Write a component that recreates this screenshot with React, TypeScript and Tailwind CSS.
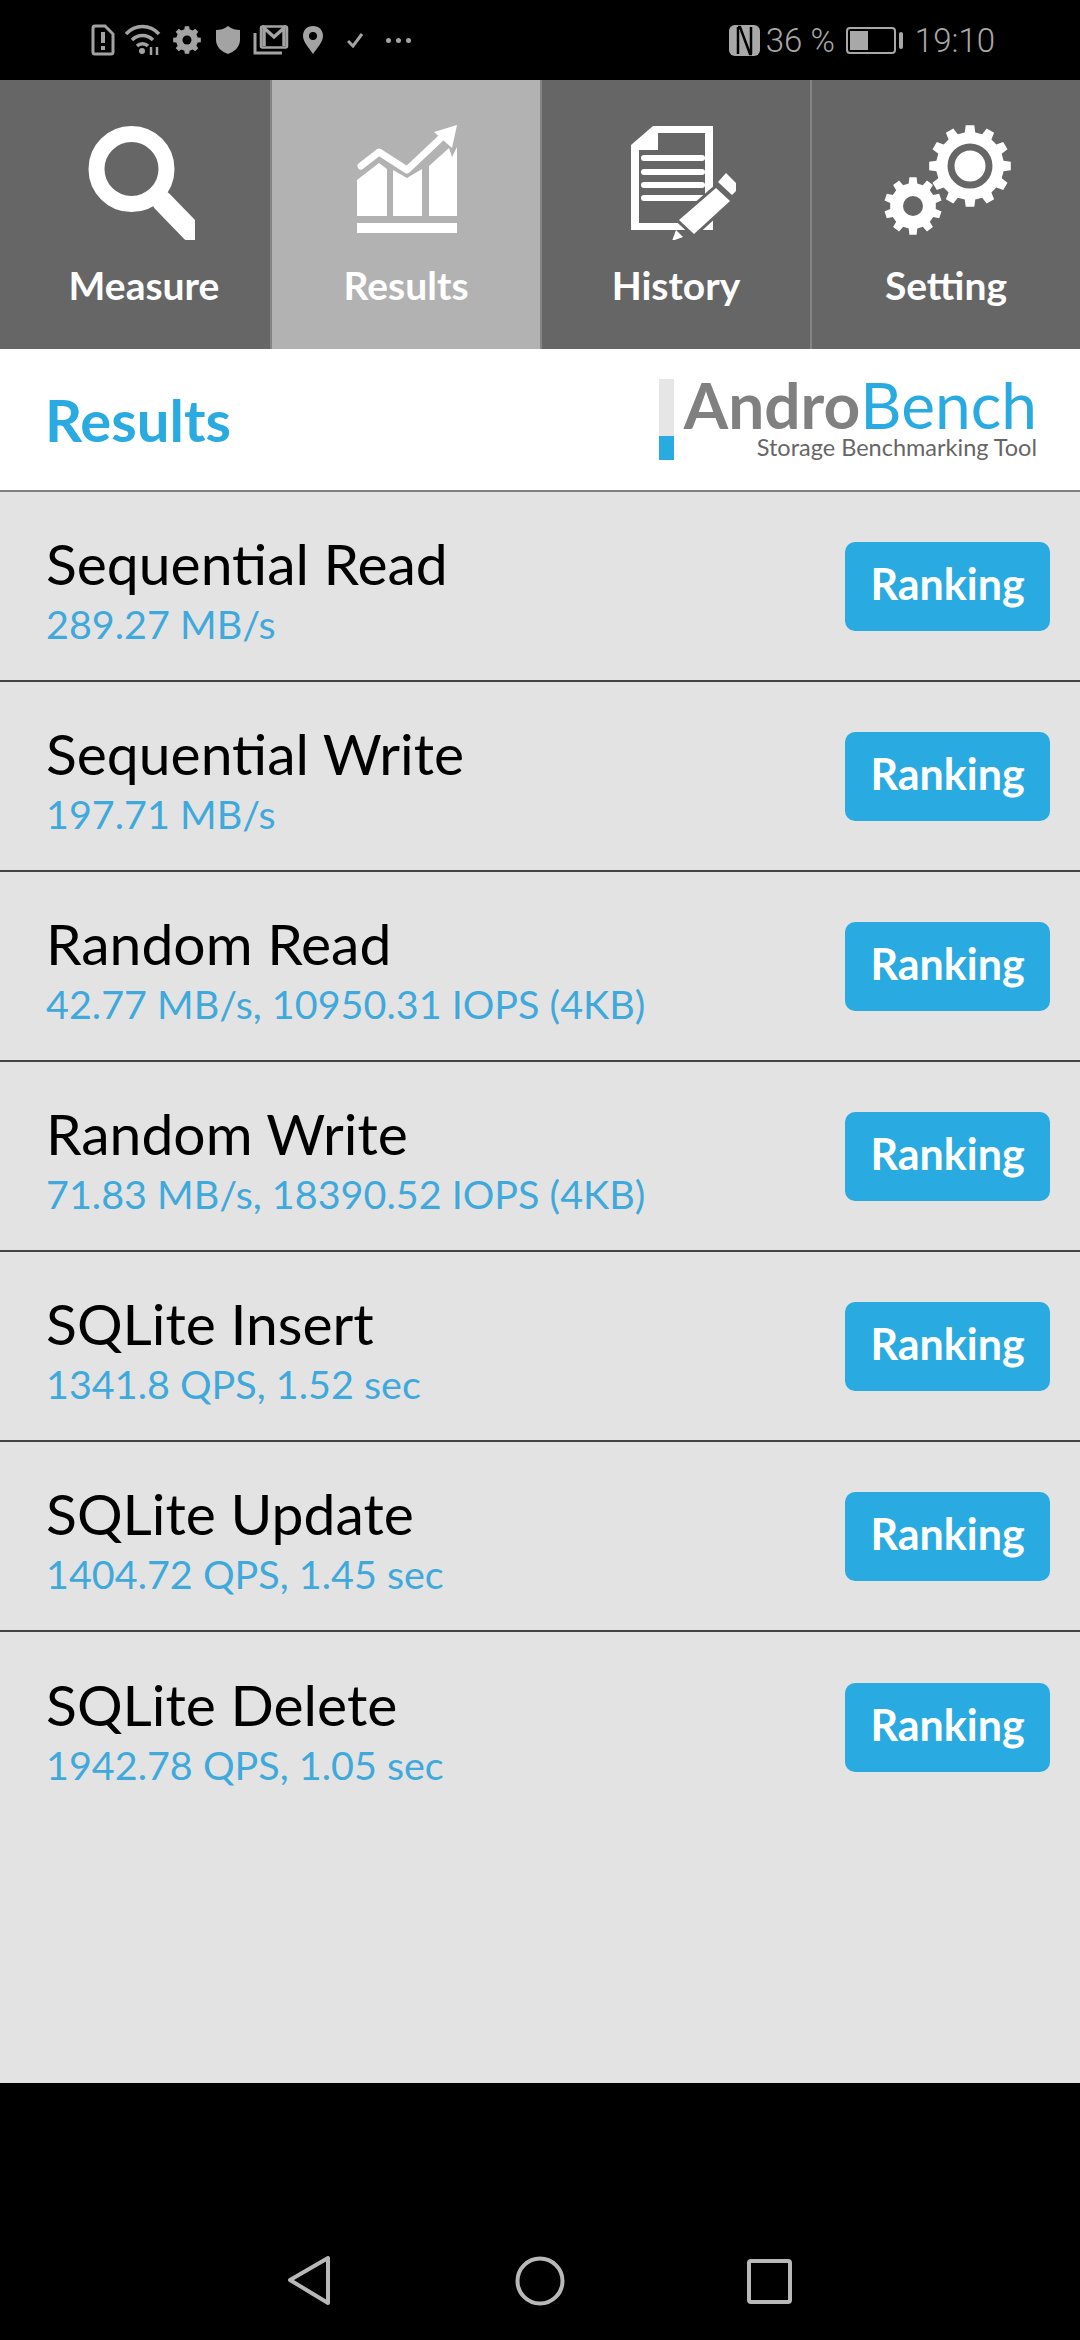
import React from 'react';

const ROWS = [
  { name: 'Sequential Read', value: '289.27 MB/s' },
  { name: 'Sequential Write', value: '197.71 MB/s' },
  { name: 'Random Read', value: '42.77 MB/s, 10950.31 IOPS (4KB)' },
  { name: 'Random Write', value: '71.83 MB/s, 18390.52 IOPS (4KB)' },
  { name: 'SQLite Insert', value: '1341.8 QPS, 1.52 sec' },
  { name: 'SQLite Update', value: '1404.72 QPS, 1.45 sec' },
  { name: 'SQLite Delete', value: '1942.78 QPS, 1.05 sec' },
];

// toothed wheel outline, used by the status bar and the Setting tab
const gearPath = (cx: number, cy: number, outer: number, root: number, teeth: number) => {
  const pts: string[] = [];
  const step = (Math.PI * 2) / teeth;
  for (let i = 0; i < teeth; i++) {
    const a = i * step - Math.PI / 2;
    const at = (r: number, da: number) =>
      `${(cx + r * Math.cos(a + da)).toFixed(1)} ${(cy + r * Math.sin(a + da)).toFixed(1)}`;
    pts.push(at(root, -step * 0.3), at(outer, -step * 0.2), at(outer, step * 0.2), at(root, step * 0.3));
  }
  return `M${pts.join('L')}Z`;
};

const MeasureIcon = () => (
  <svg width="120" height="120" viewBox="0 0 120 120">
    <circle cx="56.5" cy="49" r="35" fill="none" stroke="#fff" strokeWidth="16" />
    <path d="M87 81L116 111" stroke="#fff" strokeWidth="21" strokeLinecap="round" />
    <path d="M81 75L90 84" stroke="#fff" strokeWidth="10" />
  </svg>
);

const ResultsIcon = () => (
  <svg width="120" height="120" viewBox="0 0 120 120" fill="#fff">
    <path d="M11 60L33 43L41 49V96H11Z" />
    <path d="M47 50L61 58L76 49V96H47Z" />
    <path d="M83 46L103 28L106 37L111 27V96H83Z" />
    <rect x="11" y="103" width="100" height="10" />
    <path d="M15 46L33 32L61 50L96 17" fill="none" stroke="#fff" strokeWidth="7" strokeLinecap="round" strokeLinejoin="round" />
    <path d="M111 5L88 12L106 28Z" />
  </svg>
);

const HistoryIcon = () => (
  <svg width="120" height="120" viewBox="0 0 120 120">
    <path d="M15 25L37 6H97V110H15Z" fill="#fff" />
    <path d="M42 13H89V103H23V30H42Z" fill="#666666" />
    <path d="M28 38H86M28 52H86M28 65H86M28 78H86" stroke="#fff" strokeWidth="6" strokeLinecap="round" />
    <path d="M100 68L114 81L78 114L63 100Z" fill="#fff" stroke="#666666" strokeWidth="6" />
    <path d="M100 68L114 81L78 114L63 100Z" fill="#fff" />
    <path d="M110 53L124 67L116 75L102 62Z" fill="#fff" />
    <path d="M56 121L60 110L67 117Z" fill="#fff" />
  </svg>
);

const SettingIcon = () => (
  <svg width="120" height="120" viewBox="0 0 120 120" overflow="visible">
    <path d={gearPath(84, 46, 41, 34, 12)} fill="#fff" />
    <circle cx="84" cy="46" r="19" fill="#fff" stroke="#666666" strokeWidth="7" />
    <path d={gearPath(27, 86, 29, 23, 10)} fill="#fff" />
    <circle cx="27" cy="86" r="10" fill="#666666" />
  </svg>
);

const TABS = [
  { label: 'Measure', icon: <MeasureIcon />, bg: 'bg-[#666666]', labelClass: 'ml-[18px]' },
  { label: 'Results', icon: <ResultsIcon />, bg: 'bg-[#b2b2b2]', labelClass: '' },
  { label: 'History', icon: <HistoryIcon />, bg: 'bg-[#666666]', labelClass: '' },
  { label: 'Setting', icon: <SettingIcon />, bg: 'bg-[#666666]', labelClass: '' },
];

const StatusIcons = () => (
  <div className="flex items-center">
    <svg width="26" height="32" viewBox="0 0 26 32" className="mr-[8px]">
      <path d="M3 4a2 2 0 0 1 2-2h10l8 8v18a2 2 0 0 1-2 2H5a2 2 0 0 1-2-2Z" fill="none" stroke="#a3a3a3" strokeWidth="3" />
      <path d="M13 8v11M13 22v4" stroke="#a3a3a3" strokeWidth="4" />
    </svg>
    <svg width="38" height="32" viewBox="0 0 38 32" className="mr-[10px]" fill="none" stroke="#a3a3a3" strokeWidth="3.5">
      <path d="M2 10C11 0 26 0 35 10M8 16C14 10 23 10 29 16M13 22c3-3 8-3 11 0" />
      <circle cx="18" cy="27" r="3" fill="#a3a3a3" stroke="none" />
      <path d="M27 23v8M33 23v8" strokeWidth="2.5" />
    </svg>
    <svg width="30" height="30" viewBox="0 0 30 30" className="mr-[14px]">
      <path d={gearPath(15, 15, 14, 11, 8)} fill="#a3a3a3" />
      <circle cx="15" cy="15" r="4.5" fill="#000" />
    </svg>
    <svg width="24" height="28" viewBox="0 0 24 28" className="mr-[13px]">
      <path d="M12 0C16 3 20 4 24 4V14C24 21 18 26 12 28C6 26 0 21 0 14V4C4 4 8 3 12 0Z" fill="#a3a3a3" />
    </svg>
    <svg width="36" height="30" viewBox="0 0 36 30" className="mr-[14px]" fill="none" stroke="#a3a3a3">
      <path d="M2 8V28H29" strokeWidth="3" />
      <rect x="8" y="1.5" width="26" height="21" rx="1.5" strokeWidth="2.5" />
      <path d="M11 21V3L21 12L31 3V21" strokeWidth="3.5" />
    </svg>
    <svg width="20" height="28" viewBox="0 0 20 28" className="mr-[24px]">
      <path fillRule="evenodd" d="M10 0C16 0 20 4 20 10C20 16 14 22 10 28C6 22 0 16 0 10C0 4 4 0 10 0ZM10 6a4 4 0 1 0 0 8a4 4 0 1 0 0-8Z" fill="#a3a3a3" />
    </svg>
    <svg width="16" height="15" viewBox="0 0 16 15" className="mr-[23px]" fill="none" stroke="#a3a3a3" strokeWidth="3">
      <path d="M1 8L6 13L15 1" />
    </svg>
    <div className="flex gap-[5px]">
      <span className="h-[5px] w-[5px] rounded-full bg-[#a3a3a3]" />
      <span className="h-[5px] w-[5px] rounded-full bg-[#a3a3a3]" />
      <span className="h-[5px] w-[5px] rounded-full bg-[#a3a3a3]" />
    </div>
  </div>
);

const StatusRight = () => (
  <div className="flex items-center font-['Roboto',sans-serif] text-[33px] font-light leading-none text-[#a8a8a8]">
    <svg width="31" height="31" viewBox="0 0 31 31" className="mr-[6px]">
      <rect width="31" height="31" rx="6" fill="#a8a8a8" />
      <path d="M9 2H11L21 29H23M9 2V29M22 2V29" fill="none" stroke="#000" strokeWidth="2.5" />
    </svg>
    <span>36 %</span>
    <div className="ml-[11px] mr-[3px] flex h-[27px] w-[50px] rounded-[4px] border-2 border-[#a8a8a8] p-[2px]">
      <div className="h-full w-[18px] bg-[#a8a8a8]" />
    </div>
    <div className="mr-[12px] h-[17px] w-[4px] rounded-sm bg-[#a8a8a8]" />
    <span>19:10</span>
  </div>
);

export default function App() {
  return (
    <div className="flex h-[2340px] w-[1080px] flex-col bg-black font-['Lato',sans-serif]">
      <div className="flex h-[80px] items-center justify-between pl-[90px] pr-[85px]">
        <StatusIcons />
        <StatusRight />
      </div>

      <div className="grid h-[269px] grid-cols-4">
        {TABS.map((tab) => (
          <div
            key={tab.label}
            className={`flex flex-col items-center border-l-2 border-[#848484] pt-[40px] first:border-l-0 ${tab.bg}`}
          >
            {tab.icon}
            <span className={`mt-[21px] text-[39px] font-bold leading-[48px] text-white ${tab.labelClass}`}>{tab.label}</span>
          </div>
        ))}
      </div>

      <div className="flex h-[141px] items-center justify-between bg-white pl-[45px] pr-[43px]">
        <span className="text-[58px] font-bold text-[#29abe2]">Results</span>
        <div className="flex items-stretch">
          <div className="mr-[10px] flex h-[81px] w-[15px] flex-col justify-end bg-[#e6e6e6]">
            <div className="h-[24px] bg-[#29abe2]" />
          </div>
          <div className="flex flex-col items-end">
            <div className="-mt-[4px] text-[64px] leading-[59px]">
              <span className="font-bold text-[#808080]">Andro</span>
              <span className="text-[#29abe2]">Bench</span>
            </div>
            <span className="text-[23.5px] leading-[27px] text-[#666666]">Storage Benchmarking Tool</span>
          </div>
        </div>
      </div>

      <div className="flex flex-1 flex-col border-t-2 border-[#808080] bg-[#e3e3e3]">
        {ROWS.map((row) => (
          <div key={row.name} className="flex h-[190px] items-center justify-between border-b-2 border-[#444444] pl-[46px] pr-[30px] last:border-b-0">
            <div className="flex flex-col">
              <span className="-mt-[2px] text-[57px] leading-[78px] text-black">{row.name}</span>
              <span className="text-[39.5px] leading-[44px] text-[#3fa9dc]">{row.value}</span>
            </div>
            <div className="flex h-[89px] w-[205px] items-center justify-center rounded-[10px] bg-[#29abe2] pb-[4px] text-[43px] font-bold text-white">
              Ranking
            </div>
          </div>
        ))}
      </div>

      <div className="flex h-[257px] items-start pt-[170px]">
        <div className="flex w-full justify-center">
          <svg width="840" height="56" viewBox="240 2252 600 56" fill="none" stroke="#b8b8b8" strokeWidth="4" strokeLinejoin="round">
            <path d="M328 2257V2302L290 2279Z" />
            <circle cx="540" cy="2280" r="22.5" />
            <rect x="749" y="2260" width="41" height="41" rx="2" />
          </svg>
        </div>
      </div>
    </div>
  );
}
